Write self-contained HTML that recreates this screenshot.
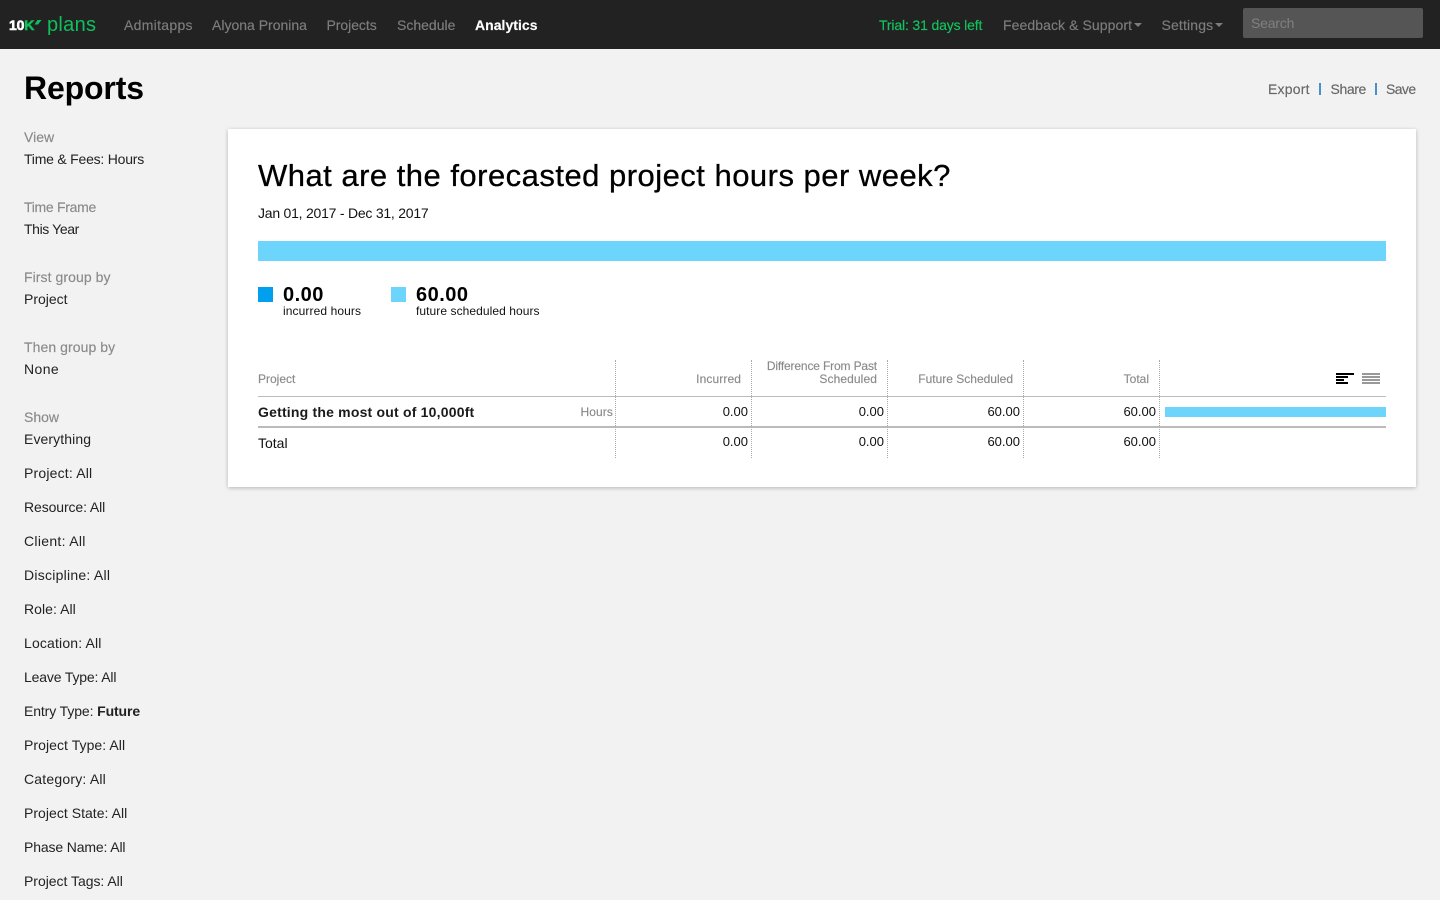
<!DOCTYPE html>
<html><head><meta charset="utf-8"><title>Reports</title>
<style>
html,body{margin:0;padding:0;width:1440px;height:900px;overflow:hidden;background:#f2f2f2;font-family:"Liberation Sans",sans-serif;}
.t{position:absolute;white-space:nowrap;line-height:20px;}
.b{position:absolute;}
.nav{font-size:14px;color:#7d7d7d;top:15px;-webkit-text-stroke:.15px;}
.s{font-size:14px;left:24px;color:#222;}
.l{font-size:14px;left:24px;color:#8a8a8a;-webkit-text-stroke:.15px;}
.r{text-align:right;}
.h{font-size:12px;color:#8a8a8a;-webkit-text-stroke:.15px;}
.n{font-size:13px;color:#111;}
.v{position:absolute;width:0;top:360px;height:98px;border-left:1px dotted #aaa;}
.a{font-size:14px;color:#666;top:79px;-webkit-text-stroke:.15px;}
</style></head><body>
<div class="b" style="left:0;top:0;width:1440px;height:49px;background:#222"></div>
<div class="t" style="left:9px;top:15px;font-size:14px;font-weight:bold;color:#fff;letter-spacing:-.2px;-webkit-text-stroke:.6px">10<span style="color:#0fc05c;-webkit-text-stroke:.6px #0fc05c">K</span></div>
<svg class="b" style="left:34px;top:19px" width="8" height="6"><path d="M0.5 5.5L3.5 1L7.5 1L4 5.5Z" fill="#0fc05c"/></svg>
<div class="t" style="left:47px;top:15px;font-size:20px;color:#0fc05c;letter-spacing:.3px">plans</div>
<div class="t nav" style="left:124px;letter-spacing:.3px">Admitapps</div>
<div class="t nav" style="left:212px;letter-spacing:0">Alyona Pronina</div>
<div class="t nav" style="left:326.5px;letter-spacing:-.05px">Projects</div>
<div class="t nav" style="left:397px;letter-spacing:0">Schedule</div>
<div class="t nav" style="left:475px;color:#fff;font-weight:bold;letter-spacing:.03px">Analytics</div>
<div class="t nav" style="left:879px;color:#12c45e;letter-spacing:-.15px">Trial: 31 days left</div>
<div class="t nav" style="left:1003px;letter-spacing:.08px">Feedback &amp; Support</div>
<div class="b" style="left:1134px;top:23px;border:4px solid transparent;border-top:4px solid #7d7d7d;border-bottom:0"></div>
<div class="t nav" style="left:1161.5px;letter-spacing:.15px">Settings</div>
<div class="b" style="left:1215px;top:23px;border:4px solid transparent;border-top:4px solid #7d7d7d;border-bottom:0"></div>
<div class="b" style="left:1243px;top:8px;width:180px;height:30px;background:#555;border-radius:2px"></div>
<div class="t" style="left:1251px;top:13px;font-size:14px;color:#808080;letter-spacing:-.2px">Search</div>

<div class="t" style="left:24px;top:70px;line-height:36px;font-size:32px;font-weight:bold;color:#000;letter-spacing:-.15px">Reports</div>
<div class="t a" style="left:1268px;letter-spacing:.2px">Export</div>
<div class="b" style="left:1319px;top:83px;width:1.5px;height:12px;background:#4a8fcb"></div>
<div class="t a" style="left:1330.5px;letter-spacing:-.4px">Share</div>
<div class="b" style="left:1375px;top:83px;width:1.5px;height:12px;background:#4a8fcb"></div>
<div class="t a" style="left:1386px;letter-spacing:-.6px">Save</div>

<div class="t l" style="top:127px">View</div><div class="t s" style="top:149px;letter-spacing:-.22px">Time &amp; Fees: Hours</div>
<div class="t l" style="top:197px;letter-spacing:-.3px">Time Frame</div><div class="t s" style="top:219px;letter-spacing:-.38px">This Year</div>
<div class="t l" style="top:267px;letter-spacing:.07px">First group by</div><div class="t s" style="top:289px">Project</div>
<div class="t l" style="top:337px;letter-spacing:.07px">Then group by</div><div class="t s" style="top:359px;letter-spacing:.4px">None</div>
<div class="t l" style="top:407px">Show</div><div class="t s" style="top:429px;letter-spacing:.1px">Everything</div>
<div class="t s" style="top:463px;letter-spacing:.18px">Project: All</div>
<div class="t s" style="top:497px;letter-spacing:-.1px">Resource: All</div>
<div class="t s" style="top:531px;letter-spacing:.3px">Client: All</div>
<div class="t s" style="top:565px;letter-spacing:.25px">Discipline: All</div>
<div class="t s" style="top:599px;letter-spacing:.05px">Role: All</div>
<div class="t s" style="top:633px;letter-spacing:.16px">Location: All</div>
<div class="t s" style="top:667px;letter-spacing:-.16px">Leave Type: All</div>
<div class="t s" style="top:701px;letter-spacing:-.11px">Entry Type: <b>Future</b></div>
<div class="t s" style="top:735px;letter-spacing:.06px">Project Type: All</div>
<div class="t s" style="top:769px;letter-spacing:.2px">Category: All</div>
<div class="t s" style="top:803px;letter-spacing:.03px">Project State: All</div>
<div class="t s" style="top:837px;letter-spacing:-.14px">Phase Name: All</div>
<div class="t s" style="top:871px;letter-spacing:-.03px">Project Tags: All</div>

<div class="b" style="left:228px;top:129px;width:1188px;height:358px;background:#fff;box-shadow:0 1px 4px rgba(0,0,0,.25)"></div>
<div class="t" style="left:258px;top:156px;line-height:40px;font-size:31px;color:#000;letter-spacing:.48px;-webkit-text-stroke:.3px">What are the forecasted project hours per week?</div>
<div class="t" style="left:258px;top:203px;font-size:14px;color:#111;letter-spacing:-.23px">Jan 01, 2017 - Dec 31, 2017</div>
<div class="b" style="left:258px;top:241px;width:1128px;height:20px;background:#6dd4fb"></div>

<div class="b" style="left:258px;top:287px;width:15px;height:15px;background:#00a0ee"></div>
<div class="t" style="left:283px;top:285px;font-size:20px;font-weight:bold;color:#000;letter-spacing:.5px">0.00</div>
<div class="t" style="left:283px;top:301px;font-size:12px;color:#111;letter-spacing:.1px">incurred hours</div>
<div class="b" style="left:391px;top:287px;width:15px;height:15px;background:#6dd4fb"></div>
<div class="t" style="left:416px;top:285px;font-size:20px;font-weight:bold;color:#000;letter-spacing:.5px">60.00</div>
<div class="t" style="left:416px;top:301px;font-size:12px;color:#111;letter-spacing:.07px">future scheduled hours</div>

<div class="b" style="left:258px;top:396px;width:1128px;height:1px;background:#bbb"></div>
<div class="b" style="left:258px;top:426px;width:1128px;height:2px;background:#bbb"></div>
<div class="v" style="left:615px"></div><div class="v" style="left:751px"></div><div class="v" style="left:887px"></div><div class="v" style="left:1023px"></div><div class="v" style="left:1159px"></div>

<div class="t h" style="left:258px;top:369px">Project</div>
<div class="t h r" style="right:699px;top:369px;letter-spacing:.1px">Incurred</div>
<div class="t h r" style="right:563px;top:360px;line-height:13px;letter-spacing:-.15px">Difference From Past<br><span style="letter-spacing:.1px">Scheduled</span></div>
<div class="t h r" style="right:427px;top:369px">Future Scheduled</div>
<div class="t h r" style="right:291px;top:369px">Total</div>

<svg class="b" style="left:1336px;top:373px" width="50" height="12">
<g fill="#000"><rect x="0" y="0" width="18" height="2"/><rect x="0" y="3" width="12" height="2"/><rect x="0" y="6" width="8" height="2"/><rect x="0" y="9" width="12" height="2"/></g>
<g fill="#999"><rect x="26" y="0" width="18" height="2"/><rect x="26" y="3" width="18" height="2"/><rect x="26" y="6" width="18" height="2"/><rect x="26" y="9" width="18" height="2"/></g>
</svg>

<div class="t" style="left:258px;top:402px;font-size:14px;font-weight:bold;color:#1a1a1a;letter-spacing:.2px">Getting the most out of 10,000ft</div>
<div class="t h r" style="right:827px;top:402px;letter-spacing:.1px">Hours</div>
<div class="t n r" style="right:692px;top:402px">0.00</div>
<div class="t n r" style="right:556px;top:402px">0.00</div>
<div class="t n r" style="right:420px;top:402px">60.00</div>
<div class="t n r" style="right:284px;top:402px">60.00</div>
<div class="b" style="left:1165px;top:407px;width:221px;height:10px;background:#6dd4fb"></div>

<div class="t" style="left:258px;top:433px;font-size:14px;color:#111">Total</div>
<div class="t n r" style="right:692px;top:432px">0.00</div>
<div class="t n r" style="right:556px;top:432px">0.00</div>
<div class="t n r" style="right:420px;top:432px">60.00</div>
<div class="t n r" style="right:284px;top:432px">60.00</div>
</body></html>
